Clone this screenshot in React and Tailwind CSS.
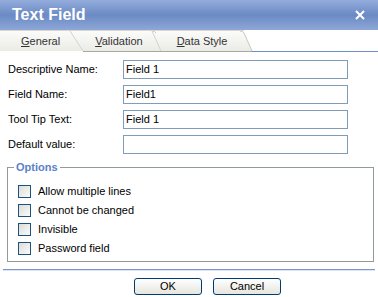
import React from "react";

const font = { fontFamily: '"Liberation Sans", Arial, sans-serif' };

function Row({ label, value }) {
  return (
    <div className="flex items-center h-[19px]">
      <div className="w-[115px] text-[11px] text-black">{label}</div>
      <div className="w-[225px] h-[19px] border border-[#7f9db9] bg-white flex items-center pl-[2px] text-[11px] text-black">
        {value}
      </div>
    </div>
  );
}

function Check({ label }) {
  return (
    <div className="flex items-center h-[13px] gap-[7px]">
      <div className="w-[13px] h-[13px] border border-[#1c5180] bg-gradient-to-br from-[#dcdcd7] to-[#fbfbf9]" />
      <span className="text-[11px] text-black">{label}</span>
    </div>
  );
}

export default function App() {
  return (
    <div className="w-[378px] h-[297px] bg-white flex flex-col overflow-hidden" style={font}>
      <div className="h-[30px] shrink-0 flex items-center justify-between pl-[12px] pr-[13px] bg-gradient-to-b from-[#94addb] via-[#6b8ac4] to-[#8ea7d7]">
        <span className="text-white font-bold text-[16px] leading-none">Text Field</span>
        <svg width="10" height="10" viewBox="0 0 10 10">
          <path d="M1 1 L9 9 M9 1 L1 9" stroke="white" strokeWidth="2" />
        </svg>
      </div>
      <div className="relative h-[22px] shrink-0">
        <svg className="absolute inset-0" width="378" height="22" viewBox="0 0 378 22">
          <defs>
            <linearGradient id="tg" x1="0" y1="0" x2="0" y2="1">
              <stop offset="0" stopColor="#fbfbfa" />
              <stop offset="1" stopColor="#ebebe6" />
            </linearGradient>
          </defs>
          <rect x="0" y="0" width="378" height="22" fill="white" />
          <path d="M0 1 L240 1 Q243 1 244 3 L252 21 L0 21 Z" fill="url(#tg)" />
          <path d="M152 1 Q155 1 156 3" fill="none" stroke="#c8c8c0" />
          <path d="M240 1 Q243 1 244 3 L252 21" fill="none" stroke="#c8c8c0" />
          <path d="M152 1 L161 21" fill="none" stroke="#d4d4cc" />
          <path d="M70 1 L83 21" fill="none" stroke="#d4d4cc" />
          <line x1="0" y1="0.5" x2="244" y2="0.5" stroke="#d8d8d0" />
          <line x1="83" y1="21.5" x2="252" y2="21.5" stroke="#a8a8a0" />
          <line x1="252" y1="21.5" x2="378" y2="21.5" stroke="#6d8fc6" />
        </svg>
        <div className="relative flex h-full items-center text-[11px] text-[#333]">
          <span className="ml-[21px]"><span className="underline">G</span>eneral</span>
          <span className="ml-[35px]"><span className="underline">V</span>alidation</span>
          <span className="ml-[34px]"><span className="underline">D</span>ata Style</span>
        </div>
      </div>
      <div className="flex flex-col gap-[6px] pl-[8px] pt-[8px]">
        <Row label="Descriptive Name:" value="Field 1" />
        <Row label="Field Name:" value="Field1" />
        <Row label="Tool Tip Text:" value="Field 1" />
        <Row label="Default value:" value="" />
      </div>
      <fieldset className="ml-[7px] w-[367px] h-[103px] mt-[5px] border border-[#919b9c] px-[10px] pt-[9px]">
        <legend className="px-[2px] text-[11px] font-bold text-[#5a81c8] -ml-[4px]">Options</legend>
        <div className="flex flex-col gap-[6px]">
          <Check label="Allow multiple lines" />
          <Check label="Cannot be changed" />
          <Check label="Invisible" />
          <Check label="Password field" />
        </div>
      </fieldset>
      <div className="mx-[3px] mt-[7px] h-[2px] border-t border-[#7a96c8] border-b border-b-[#dfe6f3]" />
      <div className="flex gap-[11px] mt-[7px] ml-[134px]">
        <button className="w-[68px] h-[17px] rounded-[3px] border border-[#003c74] bg-gradient-to-b from-white to-[#e6e5de] text-[11px] text-black leading-none">OK</button>
        <button className="w-[68px] h-[17px] rounded-[3px] border border-[#003c74] bg-gradient-to-b from-white to-[#e6e5de] text-[11px] text-black leading-none">Cancel</button>
      </div>
    </div>
  );
}
